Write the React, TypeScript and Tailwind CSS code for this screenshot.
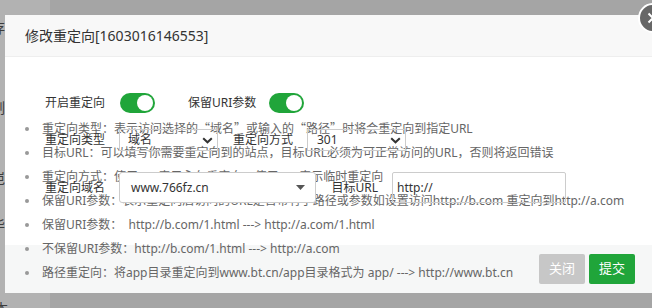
import React from "react";

function Q({ children }: { children: React.ReactNode }) {
  return <span className="font-['Noto_Sans_CJK_SC',sans-serif]">{children}</span>;
}

const HELP: React.ReactNode[] = [
  <>
    重定向类型：表示访问选择的<Q>“</Q>域名<Q>”</Q>或输入的<Q>“</Q>路径<Q>”</Q>时将会重定向到指定URL
  </>,
  "目标URL：可以填写你需要重定向到的站点，目标URL必须为可正常访问的URL，否则将返回错误",
  "重定向方式：使用301表示永久重定向，使用302表示临时重定向",
  "保留URI参数：表示重定向后访问的URL是否带有子路径或参数如设置访问http://b.com 重定向到http://a.com",
  "保留URI参数：  http://b.com/1.html ---> http://a.com/1.html",
  "不保留URI参数：http://b.com/1.html ---> http://a.com",
  "路径重定向：将app目录重定向到www.bt.cn/app目录格式为 app/ ---> http://www.bt.cn",
];

function Toggle() {
  return (
    <span className="flex h-[20px] w-[35px] items-center justify-end rounded-full bg-[#20a53a] px-[2px]">
      <span className="h-[16px] w-[16px] rounded-full bg-white" />
    </span>
  );
}

function Chevron() {
  return (
    <svg width="11" height="7" viewBox="0 0 11 7" fill="none">
      <path d="M1.2 1.2 5.5 5.3 9.8 1.2" stroke="#333" strokeWidth="2" />
    </svg>
  );
}

export default function App() {
  return (
    <div className="relative h-[308px] w-[652px] overflow-hidden bg-[#a5a5a5] font-['Noto_Sans','Noto_Sans_CJK_SC',sans-serif]">
      {/* page behind the dialog */}
      <div className="flex h-full">
        <div className="flex h-full w-[50px] flex-col bg-[#b2b2b2] text-[14px] leading-[14px] text-[#3c3c3c]">
          <span className="-ml-[9px] mt-[21px]">存</span>
          <span className="-ml-[9px] mt-[66px]">制</span>
          <span className="-ml-[9px] mt-[56px]">岂</span>
          <span className="-ml-[9px] mt-[33px]">毕</span>
          <span className="-ml-[6px] mt-[70px]">本</span>
        </div>
      </div>

      {/* dialog */}
      <div className="absolute left-[5px] top-[15px] flex h-[278px] w-[650px] flex-col bg-white">
        <div className="flex h-[42px] items-center border-b border-[#eeeeee] bg-[#f8f8f8] pl-[20px] text-[14px] text-[#333]">
          修改重定向[1603016146553]
        </div>

        <div className="relative z-10 h-[188px] px-[20px] pt-[36px]">
          <div className="flex h-[20px] items-center pl-[20px] text-[12px] text-[#333]">
            <span>开启重定向</span>
            <span className="ml-[15px]">
              <Toggle />
            </span>
            <span className="ml-[33px]">保留URI参数</span>
            <span className="ml-[13px]">
              <Toggle />
            </span>
          </div>

          <div className="mt-[3px] grid">
            <ul className="col-start-1 row-start-1 text-[12px] leading-[24px] text-[#666]">
              {HELP.map((t, i) => (
                <li key={i} className="flex items-center whitespace-pre">
                  <span className="mr-[13px] h-[4px] w-[4px] rounded-full bg-[#999]" />
                  <span>{t}</span>
                </li>
              ))}
            </ul>

            <div className="col-start-1 row-start-1 pl-[20px] pt-[13px] text-[12px] text-[#333]">
              <div className="flex h-[22px] items-center">
                <span className="mr-[14px] w-[60px]">重定向类型</span>
                <div className="flex h-full w-[99px] items-center justify-between border border-[#cccccc] pl-[8px] pr-[4px]">
                  <span>域名</span>
                  <Chevron />
                </div>
                <span className="ml-[15px] mr-[14px] w-[60px]">重定向方式</span>
                <div className="flex h-full w-[99px] items-center justify-between border border-[#cccccc] pl-[9px] pr-[4px]">
                  <span>301</span>
                  <Chevron />
                </div>
              </div>

              <div className="mt-[21px] flex h-[31px] items-center">
                <span className="mr-[14px] w-[60px]">重定向域名</span>
                <div className="flex h-full w-[197px] items-center justify-between rounded-[3px] border border-[#cccccc] bg-white pl-[11px] pr-[10px]">
                  <span>www.766fz.cn</span>
                  <svg width="9" height="5" viewBox="0 0 9 5">
                    <path d="M0 0h9L4.5 5z" fill="#555" />
                  </svg>
                </div>
                <span className="ml-[2px] mr-[14px] w-[60px] text-right">目标URL</span>
                <input
                  readOnly
                  defaultValue="http://"
                  className="h-full w-[174px] rounded-[2px] border border-[#cccccc] bg-transparent pl-[4px] text-[12px] text-[#333] outline-none"
                />
              </div>
            </div>
          </div>
        </div>

        <div className="flex h-[48px] items-center justify-end gap-[4px] bg-[#f6f7f7] pr-[20px]">
          <button className="h-[30px] w-[46px] rounded-[2px] bg-[#c7c7c7] text-[13px] text-white">关闭</button>
          <button className="h-[30px] w-[46px] rounded-[2px] bg-[#20a53a] text-[13px] text-white">提交</button>
        </div>
      </div>

      <button className="absolute left-[638px] top-[3px] flex h-[30px] w-[30px] items-center justify-center rounded-full border-2 border-white bg-[#676767]">
        <svg width="12" height="12" viewBox="0 0 12 12">
          <path d="M1.5 1.5l9 9M10.5 1.5l-9 9" stroke="white" strokeWidth="2" />
        </svg>
      </button>
    </div>
  );
}
